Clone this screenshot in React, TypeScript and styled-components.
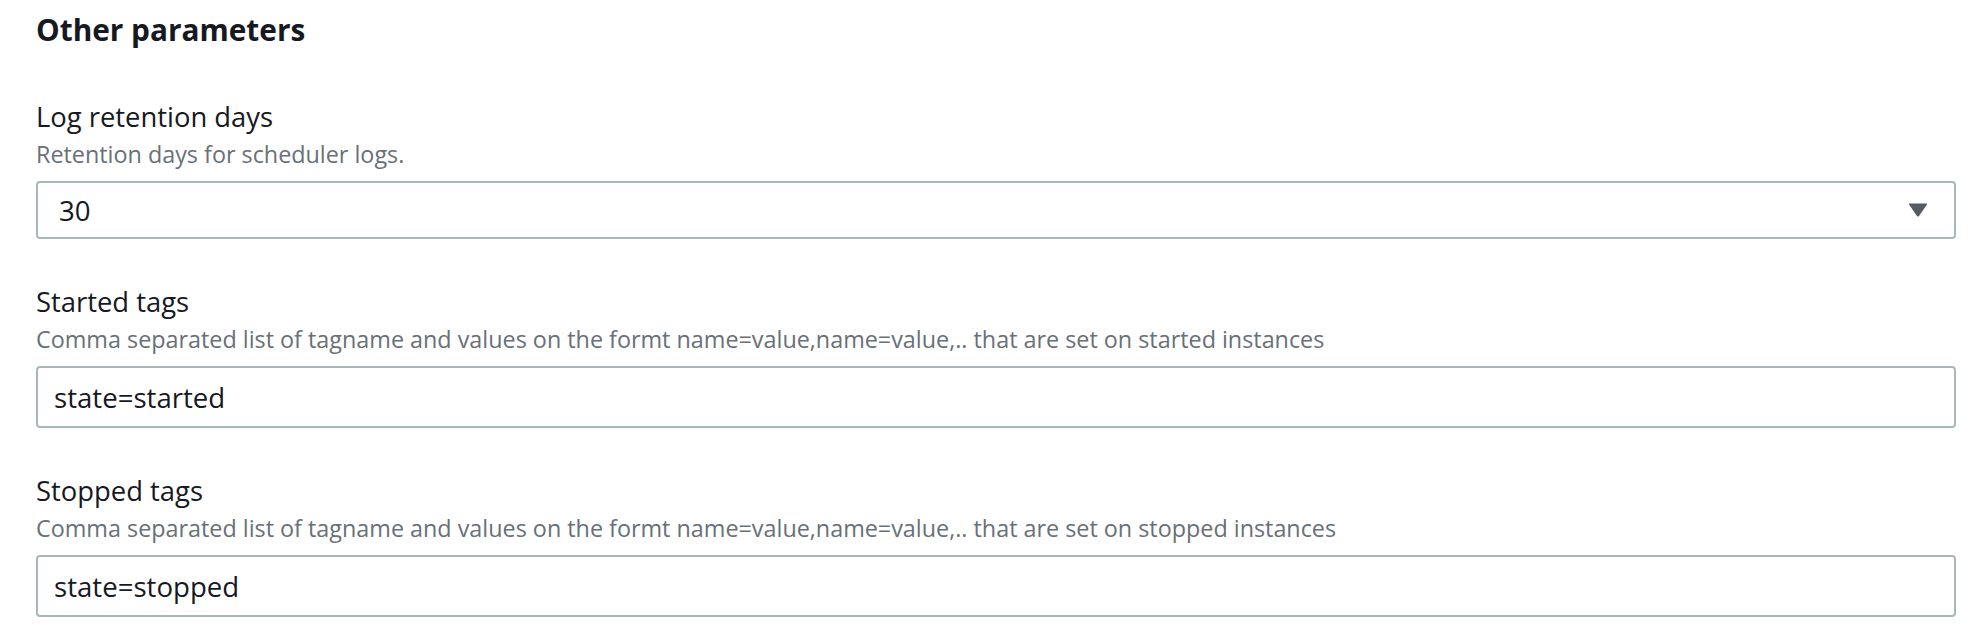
import React from "react";
import styled, { createGlobalStyle } from "styled-components";

const GlobalStyle = createGlobalStyle`
  html, body {
    margin: 0;
    padding: 0;
    background: #ffffff;
  }

  body {
    font-family: "Open Sans", "Noto Sans", "Liberation Sans", sans-serif;
    color: #16191f;
  }
`;

const Page = styled.div`
  padding: 12px 30px 0 36px;
`;

const Heading = styled.h2`
  margin: 0;
  font-size: 29.8px;
  line-height: 36px;
  font-weight: 700;
  color: #16191f;
`;

const Fields = styled.div`
  display: flex;
  flex-direction: column;
  gap: 46.5px;
  margin-top: 52.5px;
`;

const FieldBlock = styled.div`
  display: flex;
  flex-direction: column;
`;

const Label = styled.label`
  font-size: 27.4px;
  line-height: 32px;
  font-weight: 400;
  color: #16191f;
`;

const Description = styled.div`
  margin-top: 7px;
  font-size: 23.35px;
  line-height: 28px;
  color: #687078;
`;

const Control = styled.div`
  margin-top: 13.5px;
`;

const SelectBox = styled.div`
  box-sizing: border-box;
  display: flex;
  align-items: center;
  justify-content: space-between;
  height: 58px;
  padding: 0 26px 0 21px;
  border: 2px solid #aab7b8;
  border-radius: 4px;
  font-size: 27.6px;
  color: #16191f;
  cursor: pointer;
`;

const Caret = styled.svg`
  width: 20px;
  height: 14px;
  fill: #545b64;
`;

const TextInput = styled.input`
  box-sizing: border-box;
  display: block;
  width: 100%;
  height: 62px;
  padding: 0 16px;
  border: 2px solid #aab7b8;
  border-radius: 4px;
  font-family: inherit;
  font-size: 27.6px;
  color: #16191f;
  background: #ffffff;
  outline: none;
`;

interface FieldProps {
  label: string;
  description: string;
  children: React.ReactNode;
}

const Field = ({ label, description, children }: FieldProps) => (
  <FieldBlock>
    <Label>{label}</Label>
    <Description>{description}</Description>
    <Control>{children}</Control>
  </FieldBlock>
);

const tagHint = (which: string) =>
  `Comma separated list of tagname and values on the formt name=value,name=value,.. that are set on ${which} instances`;

export default function App() {
  return (
    <>
      <GlobalStyle />
      <Page>
        <Heading>Other parameters</Heading>
        <Fields>
          <Field
            label="Log retention days"
            description="Retention days for scheduler logs."
          >
            <SelectBox>
              <span>30</span>
              <Caret viewBox="0 0 20 14">
                <path d="M1 1.5 Q0.5 0.5 1.6 0.5 H18.4 Q19.5 0.5 19 1.5 L11 13 Q10 14 9 13 Z" />
              </Caret>
            </SelectBox>
          </Field>
          <Field label="Started tags" description={tagHint("started")}>
            <TextInput readOnly value="state=started" />
          </Field>
          <Field label="Stopped tags" description={tagHint("stopped")}>
            <TextInput readOnly value="state=stopped" />
          </Field>
        </Fields>
      </Page>
    </>
  );
}
